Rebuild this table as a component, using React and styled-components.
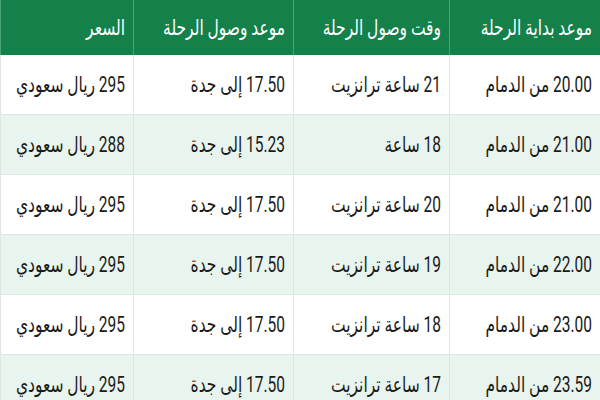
import React from 'react'
import styled, { createGlobalStyle } from 'styled-components'

const GlobalStyle = createGlobalStyle`
  body {
    margin: 0;
    background: #ffffff;
    font-family: Roboto, "DejaVu Sans", sans-serif;
  }
`

const Table = styled.div`
  direction: rtl;
  display: grid;
  grid-template-columns: 151px 156px 160px 133px;
  grid-template-rows: 55px;
  grid-auto-rows: 60px;
  width: 600px;
  height: 400px;
  overflow: hidden;
`

const HeadCell = styled.div`
  display: flex;
  align-items: center;
  padding-right: 8px;
  background: #14814b;
  color: #ffffff;
  border-left: 1px solid #4d9f74;
`

const Cell = styled.div`
  display: flex;
  align-items: center;
  padding-right: 8px;
  color: #1a1a1a;
  background: ${props => (props.$alt ? '#e8f4ee' : '#ffffff')};
  border-left: 1px solid #dfe5e2;
  border-bottom: 1px solid #dfe5e2;
`

const Text = styled.span`
  display: inline-block;
  font-size: 15.5px;
  white-space: nowrap;
  transform: scaleY(1.4);
  transform-origin: center;
`

const headers = ['موعد بداية الرحلة', 'وقت وصول الرحلة', 'موعد وصول الرحلة', 'السعر']

const rows = [
  ['20.00 من الدمام', '21 ساعة ترانزيت', '17.50 إلى جدة', '295 ريال سعودي'],
  ['21.00 من الدمام', '18 ساعة', '15.23 إلى جدة', '288 ريال سعودي'],
  ['21.00 من الدمام', '20 ساعة ترانزيت', '17.50 إلى جدة', '295 ريال سعودي'],
  ['22.00 من الدمام', '19 ساعة ترانزيت', '17.50 إلى جدة', '295 ريال سعودي'],
  ['23.00 من الدمام', '18 ساعة ترانزيت', '17.50 إلى جدة', '295 ريال سعودي'],
  ['23.59 من الدمام', '17 ساعة ترانزيت', '17.50 إلى جدة', '295 ريال سعودي'],
]

const App = () => (
  <>
    <GlobalStyle />
    <Table>
      {headers.map(h => (
        <HeadCell key={h}>
          <Text>{h}</Text>
        </HeadCell>
      ))}
      {rows.map((row, i) =>
        row.map((value, j) => (
          <Cell key={`${i}-${j}`} $alt={i % 2 === 1}>
            <Text>{value}</Text>
          </Cell>
        ))
      )}
    </Table>
  </>
)

export default App
